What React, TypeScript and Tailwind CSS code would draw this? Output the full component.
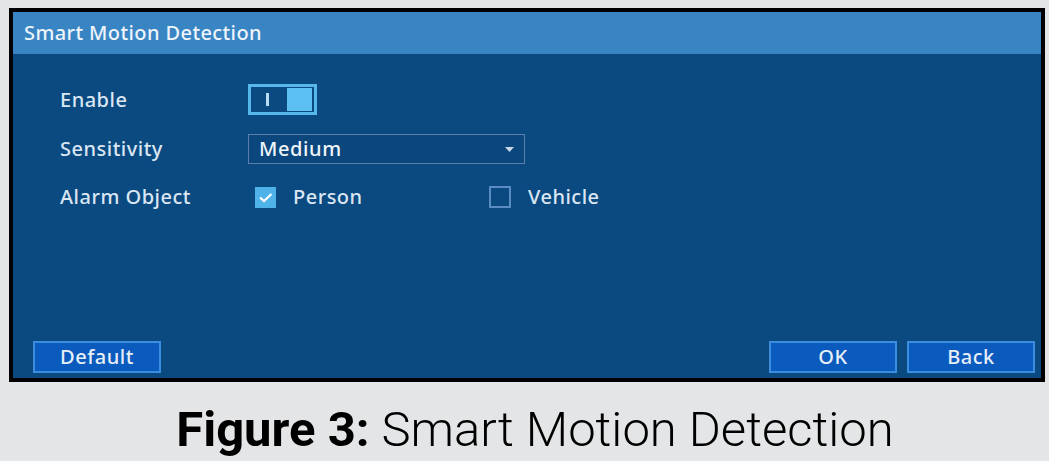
import React from 'react';

const uiFont = { fontFamily: '"Noto Sans", "Open Sans", sans-serif' };

const Button: React.FC<{ label: string }> = ({ label }) => (
    <button className="w-[128px] h-[32px] bg-[#0a5bbd] border-2 border-[#3b8ede] text-[#e6eef8] text-[20px] font-medium tracking-[0.5px] leading-none flex items-center justify-center">
        {label}
    </button>
);

const Checkbox: React.FC<{ checked?: boolean; label: string }> = ({ checked, label }) => (
    <div className="flex items-center gap-[17px]">
        {checked ? (
            <div className="w-[21px] h-[21px] bg-[#4fb3ea] flex items-center justify-center">
                <svg width="15" height="12" viewBox="0 0 15 12" fill="none">
                    <path d="M2 6.5 L6 10 L13.5 3" stroke="#ffffff" strokeWidth="2.2" />
                </svg>
            </div>
        ) : (
            <div className="w-[22px] h-[22px] border-2 border-[#5a8cc2]" />
        )}
        <span className="text-[20px] font-medium tracking-[0.5px] text-[#dae6f2]">{label}</span>
    </div>
);

export default function App() {
    return (
        <div className="w-[1049px] h-[461px] bg-[#e4e5e6] pt-[8px] pl-[9px]" style={uiFont}>
            <div className="w-[1036px] h-[374px] border-4 border-black bg-[#0b4a81] flex flex-col">
                <div className="h-[42px] bg-[#3985c4] flex items-center pl-[11px] text-[20px] tracking-[0.4px] font-medium text-[#eef4fa]">
                    Smart Motion Detection
                </div>

                <div className="flex-1 flex flex-col pl-[47px] pt-[30px]">
                    <div className="flex items-center h-[31px]">
                        <span className="w-[188px] text-[20px] font-medium tracking-[0.5px] text-[#dae6f2]">Enable</span>
                        <div className="w-[69px] h-[31px] border-[3px] border-[#57b6ea] flex items-center justify-between pl-[15px] pr-[1px]">
                            <div className="w-[3px] h-[13px] bg-[#b8dcf3]" />
                            <div className="w-[27px] h-[25px] bg-[#5cc0f2] border border-[#0c4a80]" />
                        </div>
                    </div>

                    <div className="flex items-center h-[30px] mt-[19px]">
                        <span className="w-[188px] text-[20px] font-medium tracking-[0.5px] text-[#dae6f2]">Sensitivity</span>
                        <div className="w-[277px] h-[30px] border border-[#5b7fa8] bg-[#0b477c] flex items-center justify-between pl-[10px] pr-[10px]">
                            <span className="text-[20px] tracking-[0.6px] font-medium text-[#f0f5fa]">Medium</span>
                            <svg width="9" height="5" viewBox="0 0 9 5">
                                <path d="M0 0 H9 L4.5 5 Z" fill="#c8d8ea" />
                            </svg>
                        </div>
                    </div>

                    <div className="flex items-center h-[30px] mt-[18px]">
                        <span className="w-[195px] text-[20px] font-medium tracking-[0.5px] text-[#dae6f2]">Alarm Object</span>
                        <div className="w-[234px]">
                            <Checkbox checked label="Person" />
                        </div>
                        <Checkbox label="Vehicle" />
                    </div>

                    <div className="flex-1" />

                    <div className="flex items-center -ml-[27px] mr-[6px] mb-[5px]">
                        <Button label="Default" />
                        <div className="flex-1" />
                        <div className="flex gap-[10px]">
                            <Button label="OK" />
                            <Button label="Back" />
                        </div>
                    </div>
                </div>
            </div>

            <div className="mt-[23px] -ml-[9px] w-[1049px] text-center text-[49px] leading-[49px] text-black pl-[21px]" style={{ fontFamily: 'Roboto, sans-serif' }}>
                <span className="font-bold">Figure 3:</span>
                <span className="font-light"> Smart Motion Detection</span>
            </div>
        </div>
    );
}
